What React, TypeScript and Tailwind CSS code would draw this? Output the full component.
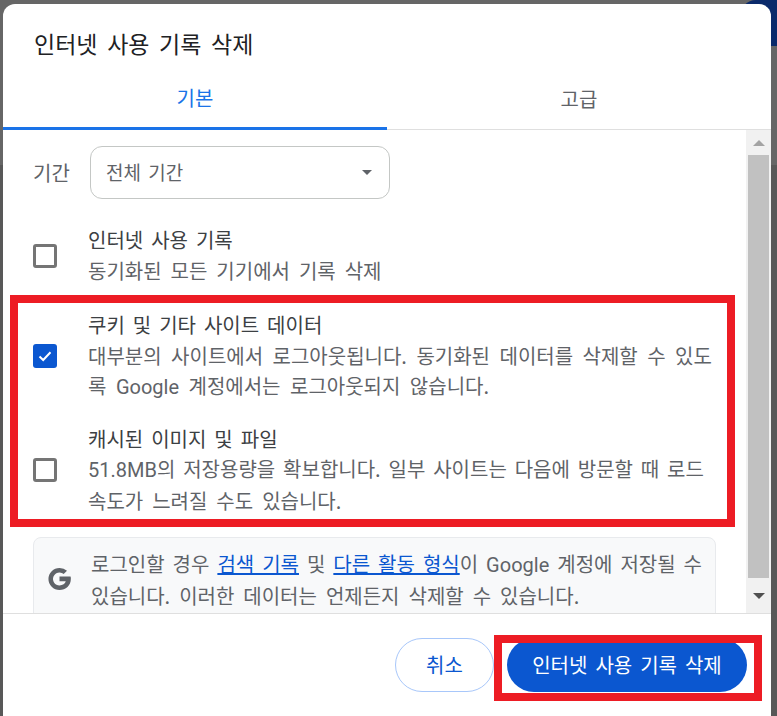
import React from "react";

const font = { fontFamily: '"Noto Sans CJK KR", sans-serif' };

function Box({ checked }: { checked?: boolean }) {
  return checked ? (
    <span className="flex h-6 w-6 shrink-0 items-center justify-center rounded-[3px] bg-[#0b57d0]">
      <svg width="16" height="16" viewBox="0 0 16 16" fill="none">
        <path d="M2.5 8.5 L6.2 12 L13.5 4.3" stroke="#fff" strokeWidth="2" />
      </svg>
    </span>
  ) : (
    <span className="block h-6 w-6 shrink-0 rounded-[3px] border-[3px] border-[#757575]" />
  );
}

function Row({ title, children, checked, cls }: { title: string; children: React.ReactNode; checked?: boolean; cls: string }) {
  return (
    <div className={`flex items-center ${cls}`}>
      <div className="w-[55px] shrink-0 pl-[30px]">
        <Box checked={checked} />
      </div>
      <div className="ml-[30px] w-[640px] text-[20px] leading-[30.5px]">
        <div className="text-[#3c4043] [word-spacing:3.5px]">{title}</div>
        <div className="text-[#5f6368] [word-spacing:4.5px]">{children}</div>
      </div>
    </div>
  );
}

export default function App() {
  return (
    <div className="relative h-[716px] w-[777px] overflow-hidden bg-[linear-gradient(#666666_165px,#585858_165px)]" style={font}>
      <div className="absolute right-0 top-0 h-[46px] w-[37px] rounded-tl-[16px] bg-[#0a2a6b]" />
      <div className="relative ml-[3px] flex h-[716px] w-[768px] flex-col">
        <div className="mt-[4px] flex h-[712px] flex-col rounded-t-[12px] bg-white">
          <div className="h-[66px] pl-[31px] pt-[21px] text-[23px] leading-[36px] text-[#202124] [word-spacing:4.5px]">인터넷 사용 기록 삭제</div>
          <div className="flex h-[60px] border-b border-[#dfdfdf]">
            <div className="flex h-[60px] w-[384px] items-center justify-center border-b-[3px] border-[#1a73e8] pb-[1px] text-[20px] text-[#1a73e8]">기본</div>
            <div className="flex h-[59px] w-[384px] items-center justify-center pb-[1px] text-[20px] text-[#5f6368]">고급</div>
          </div>
          <div className="flex h-[484px] overflow-hidden border-b border-[#dfdfdf]">
            <div className="w-[743px] shrink-0 overflow-hidden">
              <div className="flex items-center pl-[30px] pt-[16px]">
                <span className="w-[57px] text-[20px] text-[#5f6368]">기간</span>
                <div className="flex h-[53px] w-[300px] items-center justify-between rounded-[12px] border border-[#c4c7c5] pl-[15px] pr-[17px] text-[19px] text-[#5f6368] [word-spacing:3px]">
                  <span>전체 기간</span>
                  <span className="h-0 w-0 border-x-[5px] border-t-[5px] border-x-transparent border-t-[#5f6368]" />
                </div>
              </div>
              <Row title="인터넷 사용 기록" cls="mt-[26px]">동기화된 모든 기기에서 기록 삭제</Row>
              <Row title="쿠키 및 기타 사이트 데이터" checked cls="mt-[24px]">
                <span className="[word-spacing:5px]">대부분의 사이트에서 로그아웃됩니다. 동기화된 데이터를 삭제할 수 있도</span>
                <br />
                <span className="[word-spacing:5px]">록 <span className="font-['Roboto']">Google</span> 계정에서는 로그아웃되지 않습니다.</span>
              </Row>
              <Row title="캐시된 이미지 및 파일" cls="mt-[21px]">
                <span className="[word-spacing:3.4px]"><span className="font-['Roboto']">51.8MB</span>의 저장용량을 확보합니다. 일부 사이트는 다음에 방문할 때 로드</span>
                <br />
                속도가 느려질 수도 있습니다.
              </Row>
              <div className="ml-[30px] mt-[21px] flex w-[683px] items-start rounded-[8px] border border-[#e8eaed] bg-[#f8f9fa] py-[11px] pl-[13px] pr-[10px]">
                <svg width="25" height="26" viewBox="0 0 24 24" className="mr-[19px] mt-[17px] shrink-0">
                  <path fill="#5f6368" d="M22.6 9.700H12v4.500h6c-.6 2.400-2.900 4-6 4a6.200 6.200 0 1 1 4-10.900l3.200-3.200A10.600 10.600 0 0 0 12 1.400a10.600 10.600 0 1 0 0 21.200c6 0 10.900-4.200 10.900-10.800 0-.7-.1-1.400-.3-2.100z" />
                </svg>
                <div className="whitespace-nowrap text-[20px] leading-[30.5px] text-[#5f6368]">
                  <span className="[word-spacing:3.5px]">로그인할 경우 <span className="text-[#0b57d0] underline">검색 기록</span> 및 <span className="text-[#0b57d0] underline">다른 활동 형식</span>이 <span className="font-['Roboto']">Google</span> 계정에 저장될 수</span>
                  <br />
                  <span className="[word-spacing:4.5px]">있습니다. 이러한 데이터는 언제든지 삭제할 수 있습니다.</span>
                </div>
              </div>
            </div>
            <div className="flex w-[25px] flex-col bg-[#f1f1f1]">
              <div className="flex h-[25px] items-center justify-center">
                <span className="h-0 w-0 border-x-[6px] border-b-[6px] border-x-transparent border-b-[#a3a3a3]" />
              </div>
              <div className="mx-[2px] h-[423px] bg-[#c1c1c1]" />
              <div className="flex h-[35px] items-center justify-center">
                <span className="h-0 w-0 border-x-[6px] border-t-[6px] border-x-transparent border-t-[#505050]" />
              </div>
            </div>
          </div>
          <div className="flex flex-1 items-start justify-end gap-[13px] pr-[24px] pt-[24px]">
            <div className="flex h-[54px] w-[99px] items-center justify-center rounded-full border border-[#a8c7fa] text-[20px] text-[#0b57d0]">취소</div>
            <div className="flex h-[54px] w-[240px] items-center justify-center rounded-full bg-[#0b57d0] text-[20px] text-white [word-spacing:3.5px]">인터넷 사용 기록 삭제</div>
          </div>
        </div>
      </div>
      <div className="absolute left-[10px] top-[295px] h-[232px] w-[725px] border-[8px] border-[#ed1c24]" />
      <div className="absolute left-[494px] top-[635px] h-[66px] w-[268px] border-[8px] border-[#ed1c24]" />
    </div>
  );
}
